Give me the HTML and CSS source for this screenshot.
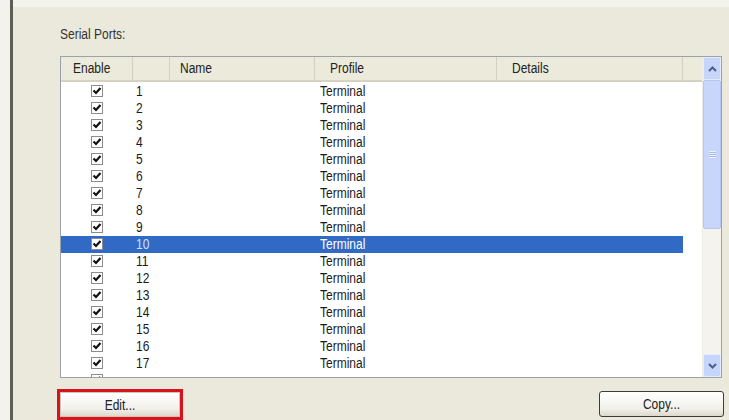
FILE: index.html
```html
<html>
<head>
  <title>Serial Ports</title>
  <link rel="stylesheet" href="styles.css">
</head>
<body>
  <div class="frame">
    <div class="gutter"></div>
    <div class="rule"></div>
    <div class="panel">
      <div class="label"><span class="txt">Serial Ports:</span></div>

      <!-- List view with the port table and its scroll bar -->
      <div class="listbox">
        <div class="listview">
          <div class="header">
            <div class="hcell c-enable"><span class="txt">Enable</span></div>
            <div class="hcell c-num"></div>
            <div class="hcell c-name"><span class="txt">Name</span></div>
            <div class="hcell c-profile"><span class="txt">Profile</span></div>
            <div class="hcell c-details"><span class="txt">Details</span></div>
            <div class="hcell c-fill"></div>
          </div>
          <div class="rows" id="portRows">
            <!-- Rows for each port are added here -->
          </div>
        </div>
        <div class="scrollbar">
          <div class="sb-btn">
            <svg width="9" height="6" viewBox="0 0 9 6"><path d="M1 5 L4.5 1.5 L8 5" fill="none" stroke="#4d6185" stroke-width="2"/></svg>
          </div>
          <div class="sb-thumb"><div class="grip"></div></div>
          <div class="sb-track"></div>
          <div class="sb-btn">
            <svg width="9" height="6" viewBox="0 0 9 6"><path d="M1 1 L4.5 4.5 L8 1" fill="none" stroke="#4d6185" stroke-width="2"/></svg>
          </div>
        </div>
      </div>

      <div class="buttons">
        <div class="marked"><button class="btn btn-edit"><span class="txt">Edit...</span></button></div>
        <button class="btn btn-copy"><span class="txt">Copy...</span></button>
      </div>
    </div>
  </div>

  <script>
    // Build one row per serial port, port 10 is the selected one
    const rows = document.getElementById('portRows');
    const check = '<svg width="13" height="13" viewBox="0 0 13 13">' +
      '<rect x="0.5" y="0.5" width="11" height="11" fill="#fff" stroke="#8c8c8c"/>' +
      '<path d="M2.5 5.5 L5 8 L9.5 3" fill="none" stroke="#111" stroke-width="2.2"/></svg>';
    for (let i = 1; i <= 18; i++) {
      const row = document.createElement('div');
      row.className = i === 10 ? 'row selected' : 'row';
      // the last row only peeks in under the list edge, so only its box shows
      const label = i < 18 ? '<span class="txt">' + i + '</span>' : '';
      const profile = i < 18 ? '<span class="txt">Terminal</span>' : '';
      row.innerHTML =
        '<div class="cell c-enable box">' + check + '</div>' +
        '<div class="cell c-num">' + label + '</div>' +
        '<div class="cell c-name"></div>' +
        '<div class="cell c-profile">' + profile + '</div>' +
        '<div class="cell c-details"></div>';
      rows.appendChild(row);
    }
  </script>
</body>
</html>
```

FILE: styles.css
```css
/* Dialog page: a thin margin, a dark rule and the beige panel */
body {
  margin: 0;
  width: 729px;
  height: 420px;
  overflow: hidden;
  background-color: #f3f2ec;
  font-family: "Liberation Sans", Arial, sans-serif;
  font-size: 12px;
  color: #222;
}
.frame {
  display: flex;
  height: 420px;
}
.gutter {
  width: 10px;
}
.rule {
  width: 3px;
  background-color: #5e5d57;
}
.panel {
  flex: 1;
  margin-top: 7px;
  padding: 20px 7px 0 47px;
  background-color: #ebe9db;
}
.txt {
  display: inline-block;
  transform: scaleY(1.22);
}
.label {
  height: 14px;
  line-height: 14px;
  margin-bottom: 15px;
  color: #333;
}

/* List view */
.listbox {
  display: flex;
  height: 320px;
  border: 1px solid #9aa3ab;
  background-color: #fff;
}
.listview {
  flex: 1;
  display: flex;
  flex-direction: column;
  overflow: hidden;
}
.header {
  display: flex;
  height: 23px;
  line-height: 23px;
  background-color: #ebeadb;
  border-bottom: 2px solid #d6d2c2;
}
.hcell {
  border-right: 1px solid #d3d0c0;
  box-sizing: border-box;
  color: #222;
}
.c-enable { width: 72px; }
.c-num { width: 37px; }
.c-name { width: 145px; }
.c-profile { width: 182px; }
.c-details { width: 186px; }
.c-fill { flex: 1; border-right: none; }
.hcell.c-enable { padding-left: 12px; }
.hcell.c-name { padding-left: 10px; }
.hcell.c-profile { padding-left: 15px; }
.hcell.c-details { padding-left: 15px; }

.rows {
  flex: 1;
  overflow: hidden;
  padding-top: 1px;
}
.row {
  display: flex;
  width: 622px;
  height: 17px;
  line-height: 17px;
  color: #1a1a1a;
}
.cell {
  box-sizing: border-box;
  white-space: nowrap;
}
.cell.box {
  display: flex;
  align-items: center;
  padding-left: 30px;
}
.cell.c-num { padding-left: 3px; }
.cell.c-profile { padding-left: 5px; }
.row.selected {
  background-color: #316ac5;
  color: #fff;
}
.row.selected .c-num {
  color: #cfe0ff;
}

/* Scroll bar */
.scrollbar {
  width: 18px;
  display: flex;
  flex-direction: column;
  background-color: #f4f3ee;
  border-left: 1px solid #eeede5;
}
.sb-btn {
  height: 21px;
  display: flex;
  align-items: center;
  justify-content: center;
  background-color: #c6d5fb;
  border: 1px solid #e6ecfd;
  border-radius: 2px;
}
.sb-thumb {
  height: 147px;
  display: flex;
  align-items: center;
  justify-content: center;
  background-color: #c8d6fb;
  border: 1px solid #b5c6f3;
  border-radius: 2px;
}
.grip {
  width: 7px;
  height: 7px;
  background: repeating-linear-gradient(#eef2fe 0 1px, #a9bbe9 1px 2px);
}
.sb-track {
  flex: 1;
}

/* Buttons under the list */
.buttons {
  display: flex;
  justify-content: space-between;
  align-items: flex-start;
  margin-top: 11px;
}
.marked {
  margin-left: -3px;
  border: 3px solid #d7141c;
}
.btn {
  display: block;
  height: 25px;
  padding: 0;
  border: 1px solid #3c3c3c;
  border-radius: 3px;
  background: linear-gradient(#ffffff, #f1f0ea 70%, #dcd8cc);
  font-family: "Liberation Sans", Arial, sans-serif;
  font-size: 12px;
  color: #222;
}
.btn-edit {
  width: 120px;
  border-color: #c9c7bb;
  border-radius: 0;
}
.btn-copy {
  width: 125px;
  height: 26px;
  margin-top: 2px;
  margin-right: -2px;
}
```
